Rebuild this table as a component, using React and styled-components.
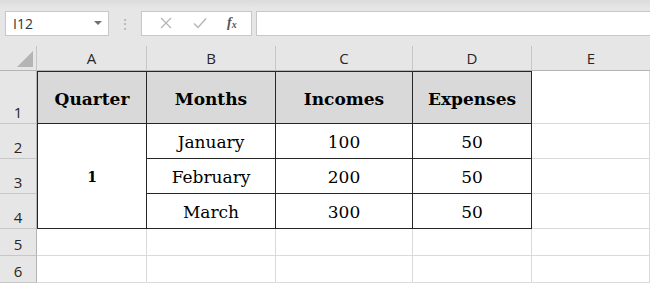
import styled, { createGlobalStyle } from "styled-components";

const GlobalStyle = createGlobalStyle`
    html, body {
        margin: 0;
        padding: 0;
        background: #e6e6e6;
        overflow: hidden;
    }
`

const columns = ["A", "B", "C", "D", "E"];

const rows = [
    { n: 1, h: 53 },
    { n: 2, h: 35 },
    { n: 3, h: 35 },
    { n: 4, h: 35 },
    { n: 5, h: 27 },
    { n: 6, h: 27 },
];

const months = [
    { name: "January", income: 100, expense: 50 },
    { name: "February", income: 200, expense: 50 },
    { name: "March", income: 300, expense: 50 },
];

export default function App(){
    return (
        <Sheet>
            <GlobalStyle />
            <FormulaBar>
                <NameBox>
                    <span>I12</span>
                    <Caret />
                </NameBox>
                <Grip>⋮</Grip>
                <FormulaButtons>
                    <svg width="12" height="12" viewBox="0 0 12 12">
                        <path d="M1 1 L11 11 M11 1 L1 11" stroke="#b5b5b5" strokeWidth="1.3" fill="none" />
                    </svg>
                    <svg width="14" height="12" viewBox="0 0 14 12">
                        <path d="M1 6.5 L5 10.5 L13 1.5" stroke="#b5b5b5" strokeWidth="1.4" fill="none" />
                    </svg>
                    <Fx>f<sub>x</sub></Fx>
                </FormulaButtons>
                <FormulaInput />
            </FormulaBar>

            <Grid>
                <Corner><Triangle /></Corner>
                {columns.map(c => <ColHead key={c} $last={c === "E"}>{c}</ColHead>)}

                {rows.map(r => <RowHead key={r.n} style={{ gridRow: r.n + 1 }}>{r.n}</RowHead>)}

                <Cell $head $dark $left $top>Quarter</Cell>
                <Cell $head $dark $top>Months</Cell>
                <Cell $head $dark $top>Incomes</Cell>
                <Cell $head $dark $top>Expenses</Cell>
                <Cell />

                <Cell $dark $left $span={3}>1</Cell>
                {months.map(m => <MonthRow key={m.name} m={m} />)}

                {[5, 6].map(n => columns.map(c => <Cell key={n + c} />))}
            </Grid>
        </Sheet>
    )
}

function MonthRow({ m }){
    return (
        <>
            <Cell $dark>{m.name}</Cell>
            <Cell $dark>{m.income}</Cell>
            <Cell $dark>{m.expense}</Cell>
            <Cell />
        </>
    )
}

const Sheet = styled.div`
    width: 650px;
    height: 283px;
    background: linear-gradient(180deg, #dcdcdc 0px, #e6e6e6 8px);
    font-family: "Open Sans", "Noto Sans", sans-serif;
`

const FormulaBar = styled.div`
    display: flex;
    align-items: center;
    height: 46px;
    padding-left: 5px;
    box-sizing: border-box;
`

const Field = styled.div`
    height: 25px;
    box-sizing: border-box;
    background: #fff;
    border: 1px solid #c8c8c8;
`

const NameBox = styled(Field)`
    width: 104px;
    display: flex;
    align-items: center;
    justify-content: space-between;
    padding: 0 6px 0 7px;
    font-size: 14px;
    color: #333;
`

const Caret = styled.div`
    width: 0;
    height: 0;
    border-left: 4px solid transparent;
    border-right: 4px solid transparent;
    border-top: 4px solid #707070;
`

const Grip = styled.div`
    width: 32px;
    text-align: center;
    color: #b0b0b0;
    font-size: 14px;
`

const FormulaButtons = styled(Field)`
    width: 111px;
    display: flex;
    align-items: center;
    justify-content: space-around;
    padding: 0 4px 0 8px;
`

const Fx = styled.span`
    font-family: "Liberation Serif", serif;
    font-style: italic;
    font-size: 14px;
    color: #555;
    font-weight: bold;

    sub {
        font-size: 10px;
        vertical-align: -1px;
    }
`

const FormulaInput = styled(Field)`
    flex: 1;
    margin-left: 4px;
    border-right: none;
`

const Grid = styled.div`
    display: grid;
    grid-template-columns: 37px 110px 129px 137px 119px 1fr;
    grid-template-rows: 25px ${rows.map(r => r.h + "px").join(" ")};
    background: #fff;
`

const Corner = styled.div`
    background: #e6e6e6;
    border-right: 1px solid #c6c6c6;
    border-bottom: 1px solid #b4b4b4;
    position: relative;
`

const Triangle = styled.div`
    position: absolute;
    right: 3px;
    bottom: 3px;
    width: 0;
    height: 0;
    border-left: 16px solid transparent;
    border-bottom: 16px solid #b4b4b4;
`

const ColHead = styled.div`
    background: #e6e6e6;
    border-right: ${p => p.$last ? "none" : "1px solid #c6c6c6"};
    border-bottom: 1px solid #b4b4b4;
    display: flex;
    align-items: center;
    justify-content: center;
    font-size: 15px;
    color: #262626;
    box-sizing: border-box;
`

const RowHead = styled.div`
    grid-column: 1;
    background: #e6e6e6;
    border-right: 1px solid #b4b4b4;
    border-bottom: 1px solid #c6c6c6;
    display: flex;
    align-items: flex-end;
    justify-content: center;
    padding-bottom: 1px;
    font-size: 15px;
    color: #262626;
    box-sizing: border-box;
`

const Cell = styled.div`
    box-sizing: border-box;
    display: flex;
    align-items: center;
    justify-content: center;
    padding-top: 2px;
    font-family: "DejaVu Serif", "Liberation Serif", serif;
    font-size: ${p => p.$head ? "17px" : "17px"};
    font-weight: ${p => p.$head ? "bold" : "normal"};
    color: #000;
    background: ${p => p.$head ? "#d9d9d9" : "#fff"};
    border-right: 1px solid ${p => p.$dark ? "#262626" : "#dadada"};
    border-bottom: 1px solid ${p => p.$dark ? "#262626" : "#dadada"};
    border-left: ${p => p.$left ? "1px solid #262626" : "none"};
    border-top: ${p => p.$top ? "1px solid #262626" : "none"};
    grid-row: ${p => p.$span ? `span ${p.$span}` : "auto"};
    ${p => p.$span ? "font-size: 14px; font-weight: bold;" : ""}
`
